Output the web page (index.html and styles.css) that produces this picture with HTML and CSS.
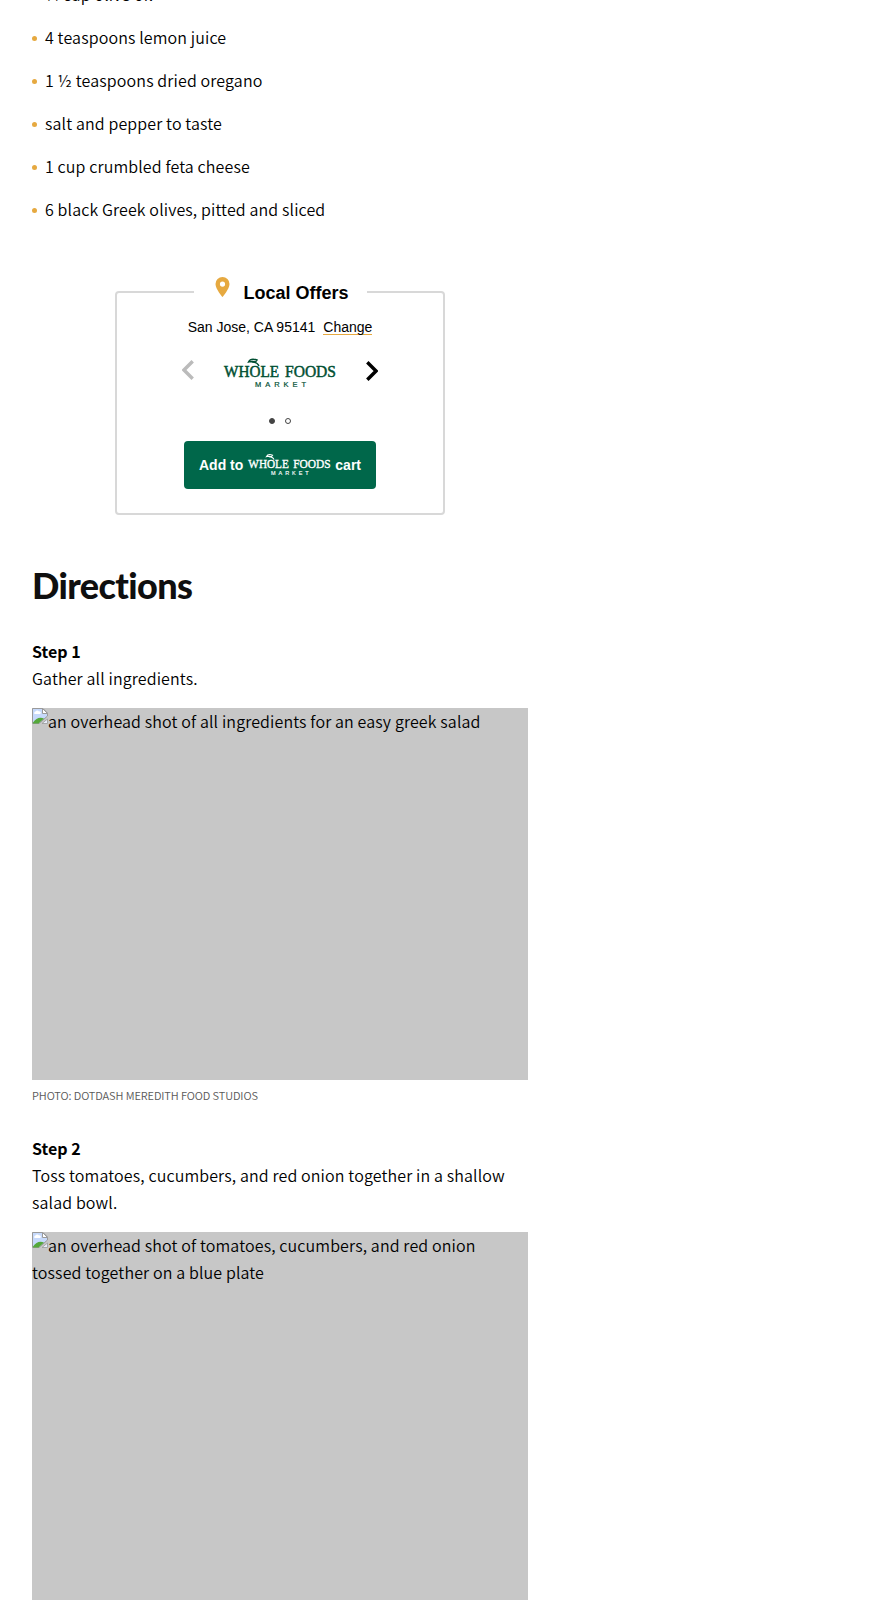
FILE: index.html
```html
<!DOCTYPE html>
<html lang="en">
<head>
<meta charset="utf-8">
<title>Greek Salad</title>
<link rel="stylesheet" href="styles.css">
</head>
<body>
<main class="recipe">
  <ul class="ingredients">
    <li>¼ cup olive oil</li>
    <li>4 teaspoons lemon juice</li>
    <li>1 ½ teaspoons dried oregano</li>
    <li>salt and pepper to taste</li>
    <li>1 cup crumbled feta cheese</li>
    <li>6 black Greek olives, pitted and sliced</li>
  </ul>

  <section class="offers">
    <h3 class="offers-title">
      <svg class="pin" viewBox="0 0 14 20"><path fill="#e6a940" fill-rule="evenodd" d="M7 0a7 7 0 0 0-7 7c0 5 7 13 7 13s7-8 7-13a7 7 0 0 0-7-7Zm0 4.500a2.600 2.600 0 1 1 0 5.200 2.600 2.600 0 0 1 0-5.200Z"/></svg>
      <span>Local Offers</span>
    </h3>
    <p class="location"><span>San Jose, CA 95141</span><a class="change">Change</a></p>
    <div class="carousel">
      <svg class="arrow prev" viewBox="0 0 12 20"><path d="M10.700 1.300L2 10L10.700 18.700"/></svg>
      <svg class="brand" viewBox="0 0 112 34">
        <text class="logo-serif" x="0" y="20" textLength="55" lengthAdjust="spacingAndGlyphs">WHOLE</text>
        <text class="logo-serif" x="61" y="20" textLength="51" lengthAdjust="spacingAndGlyphs">FOODS</text>
        <text class="logo-sans" x="31" y="30" textLength="51">MARKET</text>
        <path class="leaf" d="M24.500 5C26 2 29 1.500 33 3L31.500 5C29 4 27 4.500 24.500 5ZM28 5C31 5 34 6.500 35 9"/>
      </svg>
      <svg class="arrow next" viewBox="0 0 12 20"><path d="M1.300 1.300L10 10L1.300 18.700"/></svg>
    </div>
    <div class="dots"><i class="dot active"></i><i class="dot"></i></div>
    <button class="cart"><span>Add to</span>
      <svg class="brand-small" viewBox="0 0 112 34">
        <text class="logo-serif" x="0" y="20" textLength="55" lengthAdjust="spacingAndGlyphs">WHOLE</text>
        <text class="logo-serif" x="61" y="20" textLength="51" lengthAdjust="spacingAndGlyphs">FOODS</text>
        <text class="logo-sans" x="31" y="30" textLength="51">MARKET</text>
        <path class="leaf" d="M24.500 5C26 2 29 1.500 33 3L31.500 5C29 4 27 4.500 24.500 5ZM28 5C31 5 34 6.500 35 9"/>
      </svg><span>cart</span></button>
  </section>

  <h2 class="heading">Directions</h2>
  <section class="step">
    <h4>Step 1</h4>
    <p>Gather all ingredients.</p>
    <div class="photo"><svg class="broken" viewBox="0 0 16 16"><path d="M.5 15.500V.5H11L15.500 5V8L7 15.500Z" fill="#c6d9fb" stroke="#9a9a9a"/><path d="M2.500 6a1.600 1.600 0 0 1 1-2.500 2 2 0 0 1 3.500 0A1.300 1.300 0 0 1 8 6Z" fill="#fff"/><path d="M1 15.500V14.500C4 11 7 8.500 12 10.500L6.500 15.500Z" fill="#54a83a"/><path d="M10.500.5V5.500H15.500Z" fill="#fff" stroke="#9a9a9a"/><path d="M15.500 11V15.500H10Z" fill="#e8eefb" stroke="#9a9a9a" stroke-width=".8"/></svg>an overhead shot of all ingredients for an easy greek salad</div>
    <div class="credit">PHOTO: DOTDASH MEREDITH FOOD STUDIOS</div>
  </section>
  <section class="step">
    <h4>Step 2</h4>
    <p>Toss tomatoes, cucumbers, and red onion together in a shallow salad bowl.</p>
    <div class="photo"><svg class="broken" viewBox="0 0 16 16"><path d="M.5 15.500V.5H11L15.500 5V8L7 15.500Z" fill="#c6d9fb" stroke="#9a9a9a"/><path d="M2.500 6a1.600 1.600 0 0 1 1-2.500 2 2 0 0 1 3.500 0A1.300 1.300 0 0 1 8 6Z" fill="#fff"/><path d="M1 15.500V14.500C4 11 7 8.500 12 10.500L6.500 15.500Z" fill="#54a83a"/><path d="M10.500.5V5.500H15.500Z" fill="#fff" stroke="#9a9a9a"/><path d="M15.500 11V15.500H10Z" fill="#e8eefb" stroke="#9a9a9a" stroke-width=".8"/></svg>an overhead shot of tomatoes, cucumbers, and red onion tossed together on a blue plate</div>
  </section>
</main>
</body>
</html>
```
FILE: styles.css
```css
* { box-sizing: border-box; }
body {
  margin: 0;
  height: 1600px;
  overflow: hidden;
  background: #fff;
  color: #000;
  font: 350 16px/27px "Noto Sans CJK JP", "Noto Sans", sans-serif;
  letter-spacing: .13px;
}
h2, h3, h4, p, ul { margin: 0; padding: 0; }
.recipe { width: 496px; margin-left: 32px; }
.ingredients { list-style: none; margin-top: -19px; }
.ingredients li {
  display: flex;
  align-items: center;
  gap: 8px;
  height: 27px;
  margin-bottom: 16px;
}
.ingredients li::before {
  content: "";
  width: 5px;
  height: 5px;
  margin-top: 1px;
  border-radius: 50%;
  background: #e6a940;
}
.offers {
  display: flex;
  flex-direction: column;
  align-items: center;
  width: 330px;
  height: 224px;
  margin: 68px auto 0;
  border: 2px solid #d8d8d8;
  border-radius: 4px;
  color: #000;
  font: 14px/16px "Liberation Sans", Arial, sans-serif;
  letter-spacing: 0;
}
.offers-title {
  display: flex;
  justify-content: center;
  gap: 13px;
  width: 173px;
  height: 28px;
  margin-top: -16px;
  padding-left: 4px;
  background: #fff;
  font-size: 18px;
  line-height: 33px;
}
.pin { width: 15px; height: 20px; }
.location { display: flex; gap: 8px; margin-top: 14px; height: 18px; }
.change { height: 16px; border-bottom: 1px solid #e6a940; }
.carousel { display: flex; justify-content: space-between; width: 196px; margin-top: 20px; height: 36px; }
.arrow { width: 12px; height: 20px; margin-top: 4px; fill: none; stroke-width: 3.400; }
.prev { stroke: #bbb; margin-top: 3px; }
.next { stroke: #000; }
.brand { width: 112px; height: 34px; overflow: visible; fill: #004f32; stroke: #004f32; }
.brand-small { width: 83px; height: 25px; margin-top: 1px; overflow: visible; fill: #fff; stroke: #fff; }
.logo-serif { font: 17px "Liberation Serif", serif; stroke-width: .5; }
.logo-sans { font: 7.500px "Liberation Sans", sans-serif; stroke-width: .2; }
.leaf { fill: none; stroke-width: 1.400; }
.dots { display: flex; gap: 10px; margin-top: 25px; }
.dot { width: 6px; height: 6px; border: 1px solid #444; border-radius: 50%; }
.active { background: #444; }
.cart {
  display: flex;
  justify-content: center;
  align-items: center;
  gap: 4.500px;
  width: 192px;
  height: 48px;
  margin-top: 17px;
  padding: 0;
  border: 0;
  border-radius: 4px;
  background: #00674a;
  color: #fff;
  font: bold 14px "Liberation Sans", Arial, sans-serif;
}
.heading { margin-top: 48px; height: 75px; color: #0f0f0f; font: 900 36px/45px Lato, sans-serif; letter-spacing: -.6px; }
.step h4 { font-size: 16px; font-weight: 700; line-height: 27px; letter-spacing: 0; }
.photo { width: 496px; height: 372px; margin-top: 16px; padding-right: 10px; background: #c7c7c7; }
.broken { width: 16px; height: 16px; vertical-align: 4px; }
.credit { height: 55px; padding-top: 6px; font-size: 11px; line-height: 18px; letter-spacing: -.1px; color: #595959; }
```
